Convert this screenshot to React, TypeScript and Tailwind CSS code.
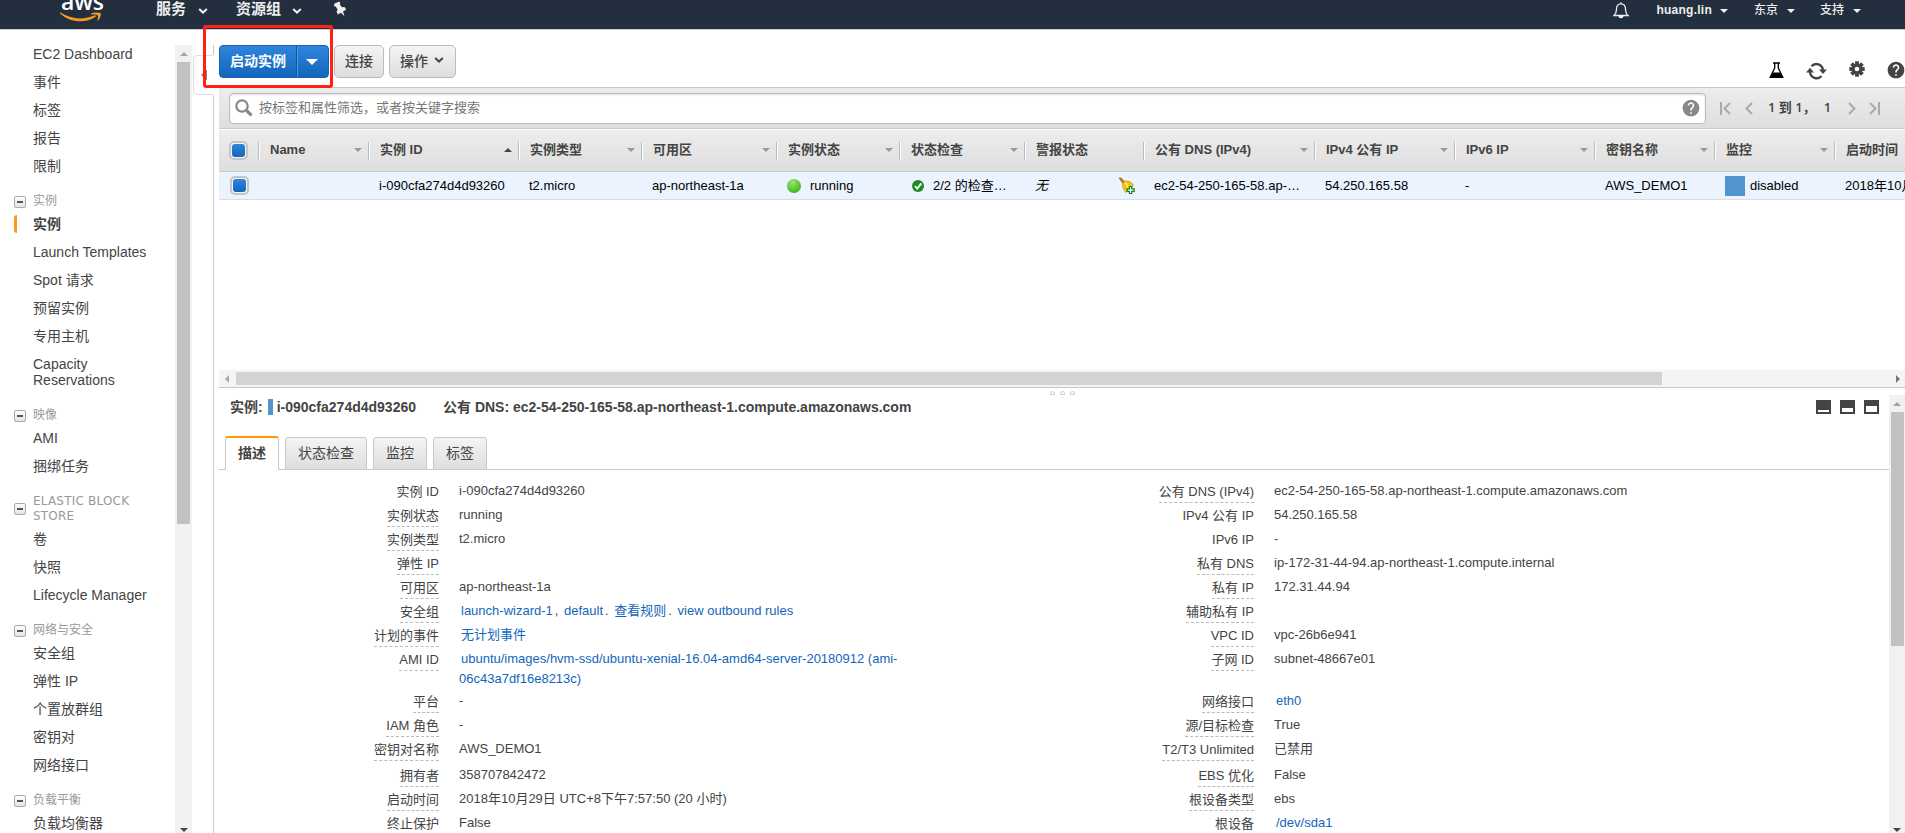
import React from 'react';
import clsx from 'clsx';
import { MdHelp } from 'react-icons/md';

interface NavSection {
  title?: string;
  items: string[];
  active?: string;
}

interface Column {
  title: string;
  width: string;
  sort?: 'asc' | 'none' | 'menu';
  cell: React.ReactNode;
}

interface Detail {
  label: string;
  value: React.ReactNode;
  plain?: boolean;
}

const sections: NavSection[] = [
  { items: ['EC2 Dashboard', '事件', '标签', '报告', '限制'] },
  {
    title: '实例',
    active: '实例',
    items: ['实例', 'Launch Templates', 'Spot 请求', '预留实例', '专用主机', 'Capacity Reservations'],
  },
  { title: '映像', items: ['AMI', '捆绑任务'] },
  { title: 'ELASTIC BLOCK STORE', items: ['卷', '快照', 'Lifecycle Manager'] },
  { title: '网络与安全', items: ['安全组', '弹性 IP', '个置放群组', '密钥对', '网络接口'] },
  { title: '负载平衡', items: ['负载均衡器'] },
];

function Triangle({ dir, className }: { dir: 'up' | 'down' | 'left' | 'right'; className?: string }) {
  const points = {
    up: '0,5 4,1 8,5',
    down: '0,1 8,1 4,5',
    left: '5,0 1,4 5,8',
    right: '1,0 5,4 1,8',
  };
  const flat = dir === 'up' || dir === 'down';
  return (
    <svg width={flat ? 8 : 6} height={flat ? 6 : 8} className={clsx('shrink-0 fill-current', className)}>
      <polygon points={points[dir]} />
    </svg>
  );
}

function Chevron({ className }: { className?: string }) {
  return (
    <svg width="10" height="6" viewBox="0 0 10 6" className={clsx('shrink-0', className)}>
      <path d="M1.2 1 5 4.6 8.8 1" fill="none" stroke="currentColor" strokeWidth="2" />
    </svg>
  );
}

function Checkbox() {
  return (
    <span className="flex h-[19px] w-[19px] items-center justify-center rounded-[5px] border-2 border-[#c4c4c4] bg-[#f4f4f4]">
      <span className="h-[13px] w-[13px] rounded-[3px] bg-gradient-to-b from-[#2e86dd] to-[#1266bb]"></span>
    </span>
  );
}

function TopBar() {
  return (
    <header className="flex h-[30px] shrink-0 items-start overflow-hidden border-b border-[#ccc] bg-[#232f3e] font-bold text-[#eee]">
      <div className="relative ml-[60px] h-[29px] w-[42px] shrink-0">
        <span className="absolute top-[-16px] left-[1px] font-['Open_Sans'] text-[23px] leading-[34px] font-semibold tracking-[-0.2px] text-white">aws</span>
        <svg width="42" height="11" viewBox="0 0 42 11" className="absolute top-[11px] left-0 fill-[#f79a1c]">
          <path d="M.6 1.600c5.800 3.800 12.500 5.800 19.400 5.800 5 0 10.200-1.100 14.900-3.100.8-.3 1.600.7.700 1.400C31.500 8.800 25.500 10.300 20.200 10.300 12.900 10.300 5.700 7.800.2 2.500c-.5-.6-.2-1.200.4-.9z" />
          <path d="M36.900 3.900c-.7-.8-4.200-.5-5.700-.3-.5 0-.5-.5-.1-.8C33.700 1 38.200 1.200 40.600 2c.7.7.1 5.200-2.600 7.400-.4.4-.9.200-.7-.3.6-1.400 1.500-4.500-.4-5.200z" />
        </svg>
      </div>
      <div className="ml-[54px] flex h-[18px] items-center text-[15px]">
        <span>服务</span>
        <Chevron className="mt-[3px] ml-[12px]" />
        <span className="ml-[28px]">资源组</span>
        <Chevron className="mt-[3px] ml-[11px]" />
      </div>
      <svg width="14" height="16" viewBox="0 0 14 16" className="mt-[1px] ml-[31px] fill-[#eee]">
        <path d="M1.200 2.800 6.200.5l1.200 1.900-.7.900 2.200 3 2.600-.3 1.700 2.600-3.100 1.800 1.300 4.800-3.300-3.500-3.200 1.700L3.500 10.600l1.200-1.900L2.700 5.400l-1.500.1z" />
      </svg>
      <div className="ml-auto flex h-[19px] items-center text-xs">
        <svg width="16" height="18" viewBox="0 0 16 18" className="mr-[27px] fill-none stroke-[#eee] stroke-[1.300]">
          <path d="M8 1.300v1.200M1 14.500h14c-1.600-1.400-2.400-3-2.400-5.500C12.600 5 11 2.900 8 2.900S3.400 5 3.400 9c0 2.500-.8 4.100-2.400 5.500z" />
          <path d="M6.300 15.500a1.800 1.800 0 0 0 3.400 0z" fill="#eee" />
        </svg>
        <span className="tracking-[0.25px]">huang.lin</span>
        <Triangle dir="down" className="mt-[2px] ml-[8px]" />
        <span className="ml-[26px] font-medium">东京</span>
        <Triangle dir="down" className="mt-[2px] ml-[9px]" />
        <span className="ml-[25px] font-medium">支持</span>
        <Triangle dir="down" className="mt-[2px] mr-[44px] ml-[9px]" />
      </div>
    </header>
  );
}

function Sidebar() {
  return (
    <aside className="flex w-[192px] shrink-0">
      <nav className="w-[175px] overflow-hidden pt-[10px] text-sm leading-4 text-[#444]">
        {sections.map((section, i) => (
          <div key={i}>
            {section.title && (
              <div className="flex items-center pt-[14px] pb-px pl-[14px] font-['DejaVu_Sans','Noto_Sans_CJK_SC',sans-serif] text-[12px] leading-[15px] text-[#999]">
                <span className="mr-[7px] flex h-[12px] w-[12px] shrink-0 items-center justify-center rounded-[2px] border border-[#aaa] bg-gradient-to-b from-white to-[#e4e4e4]">
                  <span className="h-[2px] w-[6px] bg-[#555]"></span>
                </span>
                <span className={clsx('w-[110px]', section.title.startsWith('ELASTIC') && 'tracking-[0.2px]')}>{section.title}</span>
              </div>
            )}
            {section.items.map((item) => (
              <div
                key={item}
                className={clsx(
                  'flex items-center py-[6px] pl-[14px]',
                  item === section.active && 'font-bold'
                )}
              >
                <span className={clsx('mr-4 -my-px h-[18px] w-[3px] shrink-0 rounded-l-sm', item === section.active && 'bg-[#ff9912]')}></span>
                <span className="w-[128px]">{item}</span>
              </div>
            ))}
          </div>
        ))}
      </nav>
      <div className="mt-[15px] flex w-[17px] flex-col items-center bg-[#f1f1f1] text-[#a3a3a3]">
        <div className="flex h-[17px] items-center">
          <Triangle dir="up" />
        </div>
        <div className="h-[462px] w-[13px] bg-[#c1c1c1]"></div>
        <Triangle dir="down" className="mt-auto text-[#444]" />
      </div>
    </aside>
  );
}

/* Gutter between the navigation and the content, with the collapse handle */
function Gutter() {
  return (
    <div className="flex w-[27px] shrink-0 flex-col pt-[15px] pl-[1px]">
      <div className="h-[10px] w-[21px] border-r border-[#ccc]"></div>
      <div className="flex h-[40px] w-[20px] items-center rounded-l-[5px] border border-r-0 border-[#ddd] pl-[6px] text-[#888]">
        <Triangle dir="left" />
        <span className="h-[10px] w-px bg-[#888]"></span>
      </div>
      <div className="w-[21px] flex-1 border-r border-[#ccc]"></div>
    </div>
  );
}

function Toolbar() {
  return (
    <div className="flex h-[57px] shrink-0 items-start pt-[15px] text-sm text-[#444]">
      <div className="flex h-[33px] w-[110px] rounded-[4px] border border-[#1463b4] bg-gradient-to-b from-[#2e86dd] to-[#1166bb] font-bold text-white">
        <span className="flex w-[77px] items-center justify-center border-r border-[#125a9f] pb-[2px]">启动实例</span>
        <span className="flex flex-1 items-center justify-center border-l border-[#4d98e0] pr-[2px]">
          <svg width="12" height="6" className="fill-white"><polygon points="0,0 12,0 6,6" /></svg>
        </span>
      </div>
      <button className="ml-[5px] h-[33px] w-[50px] rounded-[5px] border border-[#bbb] bg-gradient-to-b from-[#f4f4f4] to-[#dedede] pb-[2px] font-medium">连接</button>
      <button className="ml-[5px] flex h-[33px] w-[67px] items-center rounded-[5px] border border-[#bbb] bg-gradient-to-b from-[#f4f4f4] to-[#dedede] pb-[2px] pl-[10px] font-medium">
        操作
        <Chevron className="-mt-px ml-[6px]" />
      </button>
      <div className="mt-[16px] ml-auto flex h-[18px] items-center text-[#444]">
        <svg width="15" height="17" viewBox="0 0 15 17" className="text-black">
          <path d="M4 1h7M5.700 1v5L1.200 15.300h12.600L9.300 6V1" fill="none" stroke="currentColor" strokeWidth="1.300" />
          <path d="M3.600 10.500h7.800l2.600 5.500H1z" fill="currentColor" />
        </svg>
        <svg width="21" height="18" viewBox="0 0 21 18" className="ml-[22px] mt-px">
          <path d="M5.500 4.200A6.600 6.600 0 0 1 16.900 8M15.500 14A6.600 6.600 0 0 1 4 10" fill="none" stroke="currentColor" strokeWidth="2.400" />
          <path d="M13 7.500h8l-4 4.600zM0 10.400h8L4 5.800z" fill="currentColor" />
        </svg>
        <svg width="16" height="16" viewBox="-8 -8 16 16" className="-mt-[2px] ml-[22px] fill-current">
          {[0, 45, 90, 135].map((angle) => (
            <rect key={angle} x="-1.900" y="-7.700" width="3.800" height="15.400" transform={`rotate(${angle})`} />
          ))}
          <circle r="5.600" />
          <circle r="2.300" fill="#fff" />
        </svg>
        <MdHelp size={20} className="-mt-px mr-[-1px] ml-[21px]" />
      </div>
    </div>
  );
}

function SearchBar() {
  return (
    <div className="flex h-[42px] shrink-0 items-center border-y border-[#c8c8c8] bg-gradient-to-b from-[#ededed] to-[#dedede] pl-[10px]">
      <div className="flex h-[31px] w-[1477px] items-center rounded-[4px] border border-[#bbb] bg-white pr-[4px] pb-px pl-[5px] text-[13px] text-[#777] shadow-[inset_0_1px_2px_rgba(0,0,0,0.12)]">
        <svg width="18" height="18" viewBox="0 0 18 18" className="mr-[6px] mt-px fill-none stroke-[#888]">
          <circle cx="7" cy="7" r="5.700" strokeWidth="2.200" />
          <path d="m11.500 11.500 5 4.800" strokeWidth="3.200" />
        </svg>
        按标签和属性筛选，或者按关键字搜索
        <MdHelp size={20} className="ml-auto text-[#888]" />
      </div>
      <div className="ml-[14px] flex items-center text-[13px] text-[#aaa]">
        <svg width="11" height="13" className="fill-none stroke-current stroke-2"><path d="M1 0v13M10 1 4.500 6.500 10 12" /></svg>
        <svg width="8" height="13" className="ml-[14px] fill-none stroke-current stroke-2"><path d="M7 1 1.500 6.500 7 12" /></svg>
        <span className="ml-[15px] w-[81px] font-['Open_Sans','Noto_Sans_CJK_SC',sans-serif] font-semibold whitespace-pre text-[#444]">
          1 到 1，<span className="ml-[8px]">1</span>
        </span>
        <svg width="8" height="13" className="-ml-px fill-none stroke-current stroke-2"><path d="m1 1 5.500 5.500L1 12" /></svg>
        <svg width="11" height="13" className="ml-[13px] fill-none stroke-current stroke-2"><path d="m1 1 5.500 5.500L1 12M10 0v13" /></svg>
      </div>
    </div>
  );
}

function AlarmIcon() {
  return (
    <svg width="17" height="17" viewBox="0 0 17 17" className="mr-[9px] ml-auto">
      <path d="M.4.700 3 .500l4.500 4.400-2.400 2.300z" fill="#b07a10" />
      <path d="M6.700 4.200c3.600-.6 6.400.7 8.900 3.600L8 15.600C5.400 12.500 4.300 9.700 4.600 6.500z" fill="#f2c40f" stroke="#c98f08" strokeWidth=".7" />
      <path d="m7.500 5.600 3.500 6.800" stroke="#fff08a" strokeWidth="1.300" />
      <path d="M11.400 9.500h2.400v2.400h2.400v2.400h-2.400v2.200h-2.400v-2.200H9.200v-2.400h2.200z" fill="#fff" stroke="#118011" strokeWidth="1.200" />
    </svg>
  );
}

const columns: Column[] = [
  { title: 'Name', width: 'w-[110px]', cell: '' },
  { title: '实例 ID', width: 'w-[150px]', sort: 'asc', cell: 'i-090cfa274d4d93260' },
  { title: '实例类型', width: 'w-[123px]', cell: 't2.micro' },
  { title: '可用区', width: 'w-[135px]', cell: 'ap-northeast-1a' },
  {
    title: '实例状态',
    width: 'w-[123px]',
    cell: (
      <>
        <span className="mr-[9px] h-[14px] w-[14px] rounded-full bg-[radial-gradient(circle_at_40%_25%,#9be36c,#44b81c_75%,#2f9a10)]"></span>
        running
      </>
    ),
  },
  {
    title: '状态检查',
    width: 'w-[125px]',
    cell: (
      <>
        <svg width="12" height="12" viewBox="0 0 12 12" className="mr-[9px] ml-[2px]">
          <circle cx="6" cy="6" r="6" fill="#1f8a1f" />
          <path d="m3 6.200 2.300 2.400L9.300 3.400" fill="none" stroke="#fff" strokeWidth="1.900" />
        </svg>
        2/2 的检查…
      </>
    ),
  },
  { title: '警报状态', width: 'w-[119px]', sort: 'none', cell: <><i>无</i><AlarmIcon /></> },
  { title: '公有 DNS (IPv4)', width: 'w-[171px]', cell: 'ec2-54-250-165-58.ap-…' },
  { title: 'IPv4 公有 IP', width: 'w-[140px]', cell: '54.250.165.58' },
  { title: 'IPv6 IP', width: 'w-[140px]', cell: '-' },
  { title: '密钥名称', width: 'w-[120px]', cell: 'AWS_DEMO1' },
  {
    title: '监控',
    width: 'w-[120px]',
    cell: (
      <>
        <span className="mr-[5px] h-5 w-5 bg-[#5294d0]"></span>
        disabled
      </>
    ),
  },
  { title: '启动时间', width: 'w-[150px]', sort: 'none', cell: '2018年10月29日' },
];

function InstanceTable() {
  return (
    <div className="h-[241px] shrink-0 overflow-hidden text-[13px] whitespace-nowrap">
      <div className="flex h-[43px] w-[1780px] items-center border-t border-b border-t-white border-b-[#c8c8c8] bg-gradient-to-b from-[#ededed] to-[#dedede] font-bold text-[#444]">
        <div className="w-[39px] pl-[10px]"><Checkbox /></div>
        {columns.map((col) => (
          <div key={col.title} className={clsx('flex h-[18px] shrink-0 items-center border-l border-[#bbb] pr-[6px]', col.width)}>
            <span className="h-[18px] w-px bg-white"></span>
            <span className="pb-[2px] pl-[10px]">{col.title}</span>
            {col.sort !== 'none' && (
              <Triangle dir={col.sort === 'asc' ? 'up' : 'down'} className={clsx('-mt-px ml-auto', col.sort === 'asc' ? 'text-[#444]' : 'text-[#999]')} />
            )}
          </div>
        ))}
      </div>
      <div className="flex h-[28px] w-[1780px] items-center border-b border-[#d8dde3] bg-[#eaf3fe] text-black">
        <div className="w-[40px] pl-[11px]"><Checkbox /></div>
        {columns.map((col) => (
          <div key={col.title} className={clsx('flex shrink-0 items-center pl-[10px]', col.width)}>{col.cell}</div>
        ))}
      </div>
    </div>
  );
}

function HorizontalScrollbar() {
  return (
    <div className="flex h-[18px] shrink-0 items-center border-b border-[#c8c8c8] bg-[#f4f4f4]">
      <Triangle dir="left" className="mr-[6px] ml-[5px] text-[#aaa]" />
      <div className="h-[13px] w-[1426px] bg-[#d3d3d3]"></div>
      <Triangle dir="right" className="mr-[4px] ml-auto text-[#777]" />
    </div>
  );
}

function Link({ children }: { children: React.ReactNode }) {
  return <a className="ml-[2px] text-[#1166bb]">{children}</a>;
}

function Separator({ children }: { children: React.ReactNode }) {
  return <span className="ml-[2px]">{children}</span>;
}

const rows: [Detail, Detail][] = [
  [
    { label: '实例 ID', value: 'i-090cfa274d4d93260', plain: true },
    { label: '公有 DNS (IPv4)', value: 'ec2-54-250-165-58.ap-northeast-1.compute.amazonaws.com' },
  ],
  [{ label: '实例状态', value: 'running' }, { label: 'IPv4 公有 IP', value: '54.250.165.58', plain: true }],
  [{ label: '实例类型', value: 't2.micro' }, { label: 'IPv6 IP', value: '-', plain: true }],
  [{ label: '弹性 IP', value: '' }, { label: '私有 DNS', value: 'ip-172-31-44-94.ap-northeast-1.compute.internal' }],
  [{ label: '可用区', value: 'ap-northeast-1a' }, { label: '私有 IP', value: '172.31.44.94' }],
  [
    {
      label: '安全组',
      value: (
        <>
          <Link>launch-wizard-1</Link><Separator>,</Separator> <Link>default</Link><Separator>.</Separator>{' '}
          <Link>查看规则</Link><Separator>.</Separator> <Link>view outbound rules</Link>
        </>
      ),
    },
    { label: '辅助私有 IP', value: '' },
  ],
  [{ label: '计划的事件', value: <Link>无计划事件</Link> }, { label: 'VPC ID', value: 'vpc-26b6e941' }],
  [
    {
      label: 'AMI ID',
      value: <Link>ubuntu/images/hvm-ssd/ubuntu-xenial-16.04-amd64-server-20180912 (ami-06c43a7df16e8213c)</Link>,
    },
    { label: '子网 ID', value: 'subnet-48667e01' },
  ],
  [{ label: '平台', value: '-' }, { label: '网络接口', value: <Link>eth0</Link> }],
  [{ label: 'IAM 角色', value: '-' }, { label: '源/目标检查', value: 'True' }],
  [{ label: '密钥对名称', value: 'AWS_DEMO1' }, { label: 'T2/T3 Unlimited', value: '已禁用' }],
  [{ label: '拥有者', value: '358707842472' }, { label: 'EBS 优化', value: 'False' }],
  [{ label: '启动时间', value: '2018年10月29日 UTC+8下午7:57:50 (20 小时)' }, { label: '根设备类型', value: 'ebs' }],
  [{ label: '终止保护', value: 'False' }, { label: '根设备', value: <Link>/dev/sda1</Link> }],
];

function DetailCell({ detail }: { detail: Detail }) {
  return (
    <>
      <div className="text-right">
        <span className={clsx('inline-block h-[23px] pt-[2px] align-top leading-5', !detail.plain && 'border-b border-dashed border-[#bbb]')}>
          {detail.label}
        </span>
      </div>
      <div className="pt-[1px] leading-5">{detail.value}</div>
    </>
  );
}

function PaneIcon({ size }: { size: string }) {
  return (
    <span className="flex h-[14px] w-[15px] items-end bg-[#444] p-[2px]">
      <span className={clsx('w-full bg-white', size)}></span>
    </span>
  );
}

function DetailPane() {
  return (
    <div className="flex min-h-0 flex-1 text-[#444]">
      <div className="flex min-w-0 flex-1 flex-col">
        <div className="flex h-[7px] items-end justify-center gap-[5px] pl-[17px]">
          <span className="h-[4px] w-[5px] rounded-t-sm border border-[#ccc]"></span>
          <span className="h-[4px] w-[5px] rounded-t-sm border border-[#ccc]"></span>
          <span className="h-[4px] w-[5px] rounded-t-sm border border-[#ccc]"></span>
        </div>
        <div className="flex h-[24px] items-center pl-[11px] text-sm font-bold">
          实例:
          <span className="mr-[4px] ml-[5px] h-[16px] w-[5px] bg-[#5294d0]"></span>
          <span>i-090cfa274d4d93260</span>
          <span className="ml-[27px]">公有 DNS: ec2-54-250-165-58.ap-northeast-1.compute.amazonaws.com</span>
          <div className="mr-[10px] ml-auto flex gap-[9px]">
            <PaneIcon size="h-[2px]" />
            <PaneIcon size="h-[4px]" />
            <PaneIcon size="h-[6px]" />
          </div>
        </div>
        <div className="flex h-[51px] items-end text-sm">
          <div className="h-px w-[6px] bg-[#c8c8c8]"></div>
          <div className="flex h-[34px] w-[54px] items-center justify-center rounded-t-[3px] border-x border-t-2 border-x-[#c8c8c8] border-t-[#ff9900] pb-[2px] font-bold">描述</div>
          {['状态检查', '监控', '标签'].map((tab) => (
            <React.Fragment key={tab}>
              <div className="h-px w-[6px] bg-[#c8c8c8]"></div>
              <div className="flex h-[33px] items-center rounded-t-[3px] border border-[#c8c8c8] bg-gradient-to-b from-[#f4f4f4] to-[#dedede] px-[12px] pb-[2px]">{tab}</div>
            </React.Fragment>
          ))}
          <div className="h-px flex-1 bg-[#c8c8c8]"></div>
        </div>
        <div className="min-h-0 flex-1 overflow-hidden pt-[10px] text-[13px]">
          {rows.map(([left, right], i) => (
            <div
              key={left.label}
              className={clsx(
                'grid grid-cols-[220px_445px_330px_1fr] gap-x-[20px]',
                i === 7 ? 'h-[42px]' : i === 10 ? 'h-[26px]' : 'h-[24px]'
              )}
            >
              <DetailCell detail={left} />
              <DetailCell detail={right} />
            </div>
          ))}
        </div>
      </div>
      <div className="mt-[7px] flex w-[16px] flex-col items-center bg-[#f1f1f1] text-[#a3a3a3]">
        <div className="flex h-[17px] items-center">
          <Triangle dir="up" />
        </div>
        <div className="h-[234px] w-[13px] bg-[#c1c1c1]"></div>
        <Triangle dir="down" className="mt-auto text-[#444]" />
      </div>
    </div>
  );
}

export default function App() {
  return (
    <div className="relative flex h-[833px] w-[1905px] flex-col overflow-hidden bg-white font-['Liberation_Sans','Noto_Sans_CJK_SC',sans-serif]">
      <TopBar />
      <div className="flex min-h-0 flex-1">
        <Sidebar />
        <Gutter />
        <main className="flex min-w-0 flex-1 flex-col">
          <Toolbar />
          <SearchBar />
          <InstanceTable />
          <HorizontalScrollbar />
          <DetailPane />
        </main>
      </div>
      {/* Highlight round the launch button */}
      <div className="absolute top-[25px] left-[203px] h-[63px] w-[130px] rounded-[3px] border-3 border-[#ff2016]"></div>
    </div>
  );
}
